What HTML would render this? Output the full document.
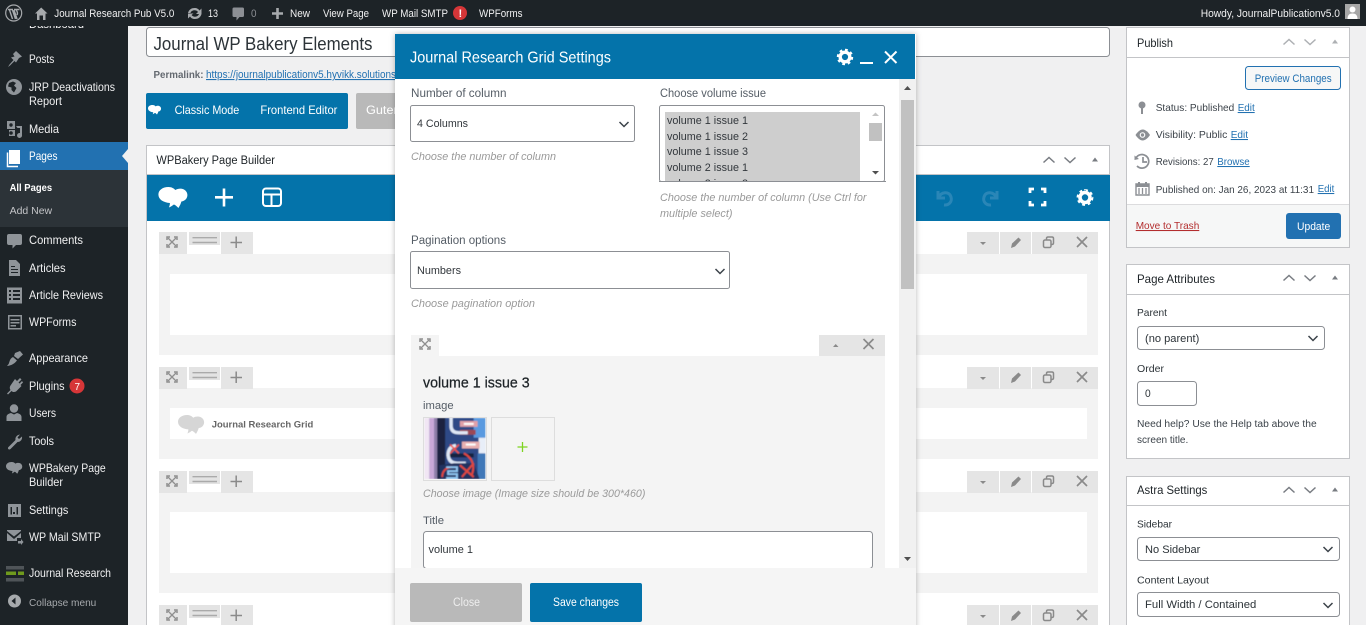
<!DOCTYPE html>
<html lang="en"><head><meta charset="utf-8"><title>Edit Page</title>
<style>
html,body{margin:0;padding:0;width:1366px;height:625px;overflow:hidden;background:#f0f0f1}
svg{display:block;font-family:"Liberation Sans",Arial,sans-serif}
</style></head><body>
<svg xmlns="http://www.w3.org/2000/svg" width="1366" height="625" viewBox="0 0 1366 625">
<defs>
<filter id="sh" x="-5%" y="-5%" width="110%" height="110%"><feDropShadow dx="0" dy="0" stdDeviation="3" flood-color="#000" flood-opacity=".28"/></filter>
<filter id="soft" x="0" y="0" width="100%" height="100%"><feGaussianBlur stdDeviation=".55"/></filter>
<path id="cloud" d="M10 0C13.500 0 15.500 1.500 17 3C18.500 2 20 1.600 22 1.600C26 1.600 29 4.500 29 8C29 11.500 26.500 14 23 14.500C22.500 16 22 18 20 21C18.500 19.500 17 18 15.500 17.500C14 18.500 13 19.500 10.500 20.500C11 19 11.500 18 11.500 16C5 15.500 0 12.500 0 7.500C0 3 4.500 0 10 0Z"/>
<g id="expand" fill="none" stroke="#8f8f8f" stroke-width="1.300"><path d="M-4-4L4 4M4-4L-4 4"/><path stroke-width="1.500" d="M-5-2V-5H-2M2-5H5V-2M5 2V5H2M-2 5H-5V2"/></g>
<path id="x" d="M-5-5L5 5M5-5L-5 5" fill="none" stroke="#8a8a8a" stroke-width="1.700"/>
<path id="chev" d="M-4.500-2L0 2.500L4.500-2" fill="none" stroke="#3c434a" stroke-width="1.500"/>
<g id="boxctl" fill="none" stroke="#787c82" stroke-width="1.500"><path d="M-5.500 2.500L0-2.500L5.500 2.500"/><path d="M15.500-2.500L21 2.500L26.500-2.500"/><path d="M46-2.500L49 1.500H43Z" fill="#787c82" stroke="none"/></g>
<g id="rowctl">
<rect x="159" y="232" width="28" height="22" fill="#e5e5e5"/><use href="#expand" x="172" y="242"/>
<rect x="189" y="232" width="31" height="13" fill="#e3e3e3"/><path d="M192.500 237.700H217M192.500 242.500H217" stroke="#aaa" stroke-width="1.400"/>
<rect x="221" y="232" width="32" height="22" fill="#e5e5e5"/><path d="M230.500 242.500H242M236.200 236.500V248" stroke="#8a8a8a" stroke-width="1.500"/>
<rect x="967" y="232" width="32" height="22" fill="#e5e5e5"/><path d="M980 242H986L983 245Z" fill="#8a8a8a"/>
<rect x="1000" y="232" width="31" height="22" fill="#e5e5e5"/><path d="M1011 248L1012 243.500L1018.500 237.500L1021 240L1015 246.500Z" fill="#8a8a8a"/>
<rect x="1032" y="232" width="66" height="22" fill="#e5e5e5"/><rect x="1043.500" y="240" width="7.500" height="7.500" rx="1.500" fill="none" stroke="#8a8a8a" stroke-width="1.500"/><path d="M1046.500 240V238.500Q1046.500 237 1048 237H1052Q1053.500 237 1053.500 238.500V243Q1053.500 244.500 1051.500 244.500" fill="none" stroke="#8a8a8a" stroke-width="1.500"/><use href="#x" x="1082" y="242"/>
</g>
</defs>

<!-- main area -->
<rect width="1366" height="625" fill="#f0f0f1"/>
<rect x="146.500" y="27.500" width="963" height="29" rx="3" fill="#fff" stroke="#8c8f94"/>
<text x="153.500" y="50" font-size="18.500" fill="#2c3338" textLength="219" lengthAdjust="spacingAndGlyphs">Journal WP Bakery Elements</text>
<text x="153.500" y="78" font-size="10.500" font-weight="bold" fill="#646970" textLength="50" lengthAdjust="spacingAndGlyphs">Permalink:</text>
<text x="206" y="78" font-size="11" fill="#2271b1" text-decoration="underline" textLength="190" lengthAdjust="spacingAndGlyphs">https://journalpublicationv5.hyvikk.solutions</text>

<rect x="146" y="93" width="202" height="36" rx="2" fill="#0473aa"/>
<use href="#cloud" transform="translate(148 105) scale(.45)" fill="#fff"/>
<g font-size="12" fill="#fff">
<text x="174.600" y="114" textLength="64.700" lengthAdjust="spacingAndGlyphs">Classic Mode</text>
<text x="260.400" y="114" textLength="77" lengthAdjust="spacingAndGlyphs">Frontend Editor</text>
</g>
<rect x="356" y="93" width="70" height="36" rx="2" fill="#b9b9b9"/>
<text x="366" y="114" font-size="12" fill="#fff" textLength="60" lengthAdjust="spacingAndGlyphs">Gutenberg</text>

<!-- WPBakery box -->
<rect x="146.500" y="145.500" width="963" height="490" fill="#fff" stroke="#c3c4c7"/>
<rect x="147" y="174" width="962" height="1" fill="#c3c4c7"/>
<text x="156.400" y="164" font-size="11.500" fill="#1d2327" textLength="118.600" lengthAdjust="spacingAndGlyphs">WPBakery Page Builder</text>
<use href="#boxctl" x="1049" y="160"/>
<rect x="147" y="175" width="963" height="46" fill="#0473aa"/>
<use href="#cloud" x="158.400" y="187" fill="#fff"/>
<path d="M215 197.300H233M224 188.500V206.500" stroke="#fff" stroke-width="2.600"/>
<rect x="263" y="188.500" width="18" height="17.500" rx="3" fill="none" stroke="#fff" stroke-width="2"/><path d="M263 194.500H281M271.500 194.500V206" stroke="#fff" stroke-width="2"/>
<g fill="none" stroke="#2a86b7" stroke-width="3"><path d="M938 191V198H945M938.500 197.500C941 192 949 190.500 951 197C952.500 202 948.500 205.500 944 205"/><path d="M997 191V198H990M996.500 197.500C994 192 986 190.500 984 197C982.500 202 986.500 205.500 991 205"/></g>
<path d="M1030 193V189H1034M1041 189H1045V193M1045 201V205H1041M1034 205H1030V201" fill="none" stroke="#fff" stroke-width="2.800"/>
<g fill="none" stroke="#fff"><circle cx="1085" cy="197.500" r="5" stroke-width="3.600"/><circle cx="1085" cy="197.500" r="7.200" stroke-width="2.400" pathLength="16" stroke-dasharray="1 1"/></g>

<!-- rows -->
<rect x="159" y="254" width="939" height="101" fill="#f3f3f3"/><rect x="170" y="274" width="917" height="61" fill="#fff"/>
<rect x="159" y="388" width="939" height="71" fill="#f3f3f3"/><rect x="170" y="408" width="917" height="31" fill="#fff"/>
<rect x="159" y="492" width="939" height="101" fill="#f3f3f3"/><rect x="170" y="512" width="917" height="61" fill="#fff"/>
<use href="#rowctl"/>
<use href="#rowctl" y="135"/>
<use href="#rowctl" y="239"/>
<use href="#rowctl" y="373"/>
<use href="#cloud" transform="translate(178 415) scale(.9)" fill="#d6d6d6"/>
<text x="211.700" y="427.500" font-size="9.500" font-weight="bold" fill="#666" textLength="101.600" lengthAdjust="spacingAndGlyphs">Journal Research Grid</text>

<!-- right column: publish -->
<rect x="1126.500" y="27.500" width="223" height="220" fill="#fff" stroke="#c3c4c7"/>
<rect x="1127" y="57" width="222" height="1" fill="#c3c4c7"/>
<text x="1137" y="47" font-size="12" fill="#1d2327" textLength="36" lengthAdjust="spacingAndGlyphs">Publish</text>
<use href="#boxctl" x="1289" y="42" opacity=".6"/>
<rect x="1245.500" y="66.500" width="95" height="23" rx="3" fill="#f6f7f7" stroke="#2271b1"/>
<text x="1254.700" y="82" font-size="11" fill="#2271b1" textLength="77" lengthAdjust="spacingAndGlyphs">Preview Changes</text>
<g font-size="10.500" fill="#3c434a">
<text x="1155.700" y="111" textLength="78.600" lengthAdjust="spacingAndGlyphs">Status: Published</text>
<text x="1155.700" y="138" textLength="71.600" lengthAdjust="spacingAndGlyphs">Visibility: Public</text>
<text x="1155.700" y="165" textLength="58" lengthAdjust="spacingAndGlyphs">Revisions: 27</text>
<text x="1155.700" y="193" textLength="158.300" lengthAdjust="spacingAndGlyphs">Published on: Jan 26, 2023 at 11:31</text>
</g>
<g font-size="10.500" fill="#2271b1" text-decoration="underline">
<text x="1237.700" y="111" textLength="17" lengthAdjust="spacingAndGlyphs">Edit</text>
<text x="1230.700" y="138" textLength="17.300" lengthAdjust="spacingAndGlyphs">Edit</text>
<text x="1217.300" y="165" textLength="32.400" lengthAdjust="spacingAndGlyphs">Browse</text>
<text x="1317.700" y="192" textLength="16.600" lengthAdjust="spacingAndGlyphs">Edit</text>
</g>
<g fill="#8c8f94">
<circle cx="1142" cy="105" r="3.500"/><rect x="1141" y="106" width="2" height="8"/>
<path d="M1135.500 135C1138 131 1141 129.500 1142.500 129.500C1144.500 129.500 1147.500 131 1150 135C1147.500 139 1144.500 140.500 1142.500 140.500C1141 140.500 1138 139 1135.500 135Z"/><circle cx="1142.500" cy="135" r="2.800" fill="#fff"/><circle cx="1142.500" cy="135" r="1.700"/>
</g>
<path d="M1136 158A6.800 6.800 0 1 1 1137 166M1143 157V162H1147" fill="none" stroke="#8c8f94" stroke-width="1.700"/><path d="M1134.500 155.500L1139 159L1134.500 160Z" fill="#8c8f94"/>
<path d="M1136 184H1149V195H1136Z" fill="none" stroke="#8c8f94" stroke-width="1.400"/><path d="M1136 184H1149V187H1136ZM1138 182H1140V185H1138ZM1145 182H1147V185H1145Z" fill="#8c8f94"/><path d="M1139 188V194M1142.500 188V194M1146 188V194" stroke="#8c8f94" stroke-width="1.300"/>
<rect x="1127" y="204" width="222" height="43" fill="#f6f7f7"/><rect x="1127" y="204" width="222" height="1" fill="#dcdcde"/>
<text x="1135.700" y="229" font-size="10.500" fill="#b32d2e" text-decoration="underline" textLength="63.600" lengthAdjust="spacingAndGlyphs">Move to Trash</text>
<rect x="1286" y="213" width="55" height="26" rx="3" fill="#2271b1"/>
<text x="1297" y="230" font-size="11" fill="#fff" textLength="33.300" lengthAdjust="spacingAndGlyphs">Update</text>

<!-- page attributes -->
<rect x="1126.500" y="264.500" width="223" height="194" fill="#fff" stroke="#c3c4c7"/>
<rect x="1127" y="294" width="222" height="1" fill="#c3c4c7"/>
<text x="1137" y="283" font-size="12" fill="#1d2327" textLength="78" lengthAdjust="spacingAndGlyphs">Page Attributes</text>
<use href="#boxctl" x="1289" y="278"/>
<text x="1137" y="316" font-size="10.500" fill="#2c3338" textLength="30" lengthAdjust="spacingAndGlyphs">Parent</text>
<rect x="1137.500" y="326.500" width="187" height="23" rx="3" fill="#fff" stroke="#8c8f94"/>
<text x="1145" y="342" font-size="11" fill="#2c3338" textLength="54.300" lengthAdjust="spacingAndGlyphs">(no parent)</text><use href="#chev" x="1313" y="338"/>
<text x="1137" y="372" font-size="10.500" fill="#2c3338" textLength="27" lengthAdjust="spacingAndGlyphs">Order</text>
<rect x="1137.500" y="381.500" width="59" height="24" rx="3" fill="#fff" stroke="#8c8f94"/>
<text x="1145" y="397" font-size="11" fill="#2c3338" textLength="5.700" lengthAdjust="spacingAndGlyphs">0</text>
<text x="1137" y="427" font-size="10" fill="#3c434a" textLength="179.700" lengthAdjust="spacingAndGlyphs">Need help? Use the Help tab above the</text>
<text x="1137" y="443" font-size="10" fill="#3c434a" textLength="51.300" lengthAdjust="spacingAndGlyphs">screen title.</text>

<!-- astra -->
<rect x="1126.500" y="476.500" width="223" height="160" fill="#fff" stroke="#c3c4c7"/>
<rect x="1127" y="505" width="222" height="1" fill="#c3c4c7"/>
<text x="1137" y="494" font-size="12" fill="#1d2327" textLength="70.300" lengthAdjust="spacingAndGlyphs">Astra Settings</text>
<use href="#boxctl" x="1289" y="490"/>
<text x="1137" y="527.500" font-size="10.500" fill="#2c3338" textLength="35" lengthAdjust="spacingAndGlyphs">Sidebar</text>
<rect x="1137.500" y="537.500" width="202" height="23" rx="3" fill="#fff" stroke="#8c8f94"/>
<text x="1145" y="553" font-size="11" fill="#2c3338" textLength="55.300" lengthAdjust="spacingAndGlyphs">No Sidebar</text><use href="#chev" x="1328" y="549"/>
<text x="1137" y="583.500" font-size="10.500" fill="#2c3338" textLength="72" lengthAdjust="spacingAndGlyphs">Content Layout</text>
<rect x="1137.500" y="592.500" width="202" height="24" rx="3" fill="#fff" stroke="#8c8f94"/>
<text x="1145" y="608" font-size="11" fill="#2c3338" textLength="111.300" lengthAdjust="spacingAndGlyphs">Full Width / Contained</text><use href="#chev" x="1328" y="605"/>

<!-- sidebar -->
<rect x="0" y="0" width="128" height="625" fill="#1d2327"/>
<text x="29" y="28" font-size="12" fill="#f0f0f1" textLength="55" lengthAdjust="spacingAndGlyphs">Dashboard</text>
<rect x="0" y="142" width="128" height="28" fill="#2271b1"/>
<path d="M128 149L122 156L128 163Z" fill="#f0f0f1"/>
<rect x="0" y="170" width="128" height="57" fill="#2c3338"/>
<g font-size="12" fill="#f0f0f1">
<text x="29" y="63" textLength="25.300" lengthAdjust="spacingAndGlyphs">Posts</text>
<text x="29" y="91" textLength="86" lengthAdjust="spacingAndGlyphs">JRP Deactivations</text>
<text x="29" y="105" textLength="33" lengthAdjust="spacingAndGlyphs">Report</text>
<text x="29" y="133" textLength="30" lengthAdjust="spacingAndGlyphs">Media</text>
<text x="29" y="160" fill="#fff" textLength="28.500" lengthAdjust="spacingAndGlyphs">Pages</text>
<text x="29" y="244" textLength="54" lengthAdjust="spacingAndGlyphs">Comments</text>
<text x="29" y="272" textLength="36.600" lengthAdjust="spacingAndGlyphs">Articles</text>
<text x="29" y="299" textLength="74" lengthAdjust="spacingAndGlyphs">Article Reviews</text>
<text x="29" y="326" textLength="47.400" lengthAdjust="spacingAndGlyphs">WPForms</text>
<text x="29" y="362" textLength="59" lengthAdjust="spacingAndGlyphs">Appearance</text>
<text x="29" y="390" textLength="35.600" lengthAdjust="spacingAndGlyphs">Plugins</text>
<text x="29" y="417" textLength="27" lengthAdjust="spacingAndGlyphs">Users</text>
<text x="29" y="445" textLength="25" lengthAdjust="spacingAndGlyphs">Tools</text>
<text x="29" y="472" textLength="76.700" lengthAdjust="spacingAndGlyphs">WPBakery Page</text>
<text x="29" y="486" textLength="34" lengthAdjust="spacingAndGlyphs">Builder</text>
<text x="29" y="514" textLength="39.300" lengthAdjust="spacingAndGlyphs">Settings</text>
<text x="29" y="541" textLength="72" lengthAdjust="spacingAndGlyphs">WP Mail SMTP</text>
<text x="29" y="577" textLength="82" lengthAdjust="spacingAndGlyphs">Journal Research</text>
</g>
<text x="9.600" y="191" font-size="10" font-weight="bold" fill="#fff" textLength="42.500" lengthAdjust="spacingAndGlyphs">All Pages</text>
<text x="9.600" y="214" font-size="10" fill="#c3c4c7" textLength="42.500" lengthAdjust="spacingAndGlyphs">Add New</text>
<text x="29" y="606" font-size="10.500" fill="#a7aaad" textLength="67.300" lengthAdjust="spacingAndGlyphs">Collapse menu</text>
<circle cx="77" cy="386" r="7.500" fill="#d63638"/><text x="74.500" y="390" font-size="10" fill="#fff">7</text>

<g fill="#8f9499">
<path d="M13 54L16 51L22 56.500L19 58L16 62.500L14.500 61L10 65.500L8 67L9.500 64.500L13.500 60L11 57.500L14.500 56.500Z"/>
<path fill-rule="evenodd" d="M14 79A8 8 0 1 0 14 95A8 8 0 1 0 14 79ZM9 83L13 81.500L16 83L14 85.500L16.500 88L14 92.500L11.500 90L11.500 87.500L8 86.500Z"/>
<path d="M7 121H15V129H7ZM9 130H15V136H9Z"/><path d="M16 126H22V135A2.500 2.500 0 1 1 20 133V128H17.500Z"/><circle cx="11" cy="125" r="1.700" fill="#1d2327"/><circle cx="11" cy="133" r="1.800" fill="#1d2327"/>
<path d="M9 234H20Q22 234 22 236V243Q22 245 20 245H16L12.500 248.500V245H9Q7 245 7 243V236Q7 234 9 234Z"/>
<path fill-rule="evenodd" d="M9 260H16L20 264V276H9ZM11 266V267H15V266ZM11 269V270H18V269ZM11 272V273H18V272Z"/>
<path fill-rule="evenodd" d="M7 287.500H22V303.500H7ZM9 290V292H11V290ZM13 290V292H20V290ZM9 294V296H11V294ZM13 294V296H20V294ZM9 298V300H11V298ZM13 298V300H20V298Z"/>
<path fill-rule="evenodd" d="M8 315H22V329.500H8ZM9.500 316.500V328H20.500V316.500ZM10.500 319H19.500V320.500H10.500ZM10.500 322H19.500V323.500H10.500ZM10.500 325H16V326.500H10.500Z"/>
<path d="M15 353L20 351L23 354.500L18 359L14 356ZM13 357L17 360.500C15 363 12 365.500 7 366C9 364 9 363 9.500 361.500C10 359.500 11 358 13 357Z"/>
<path d="M15 379L17 381L20 378L21.500 379.500L18.500 382.500L19.500 383.500L22 381L23 382.500L20.500 385L21.500 386L16 391.500C14 392.500 12.500 392 11.500 391L8 394.500L7 393.500L10.500 390C9.500 388.500 9.500 387 10.500 385.500Z"/>
<circle cx="14" cy="408.500" r="4.200"/><path d="M6.500 421V417C6.500 414.500 9 413.500 11 413L14 414.500L17 413C19 413.500 21.500 414.500 21.500 417V421Z"/>
<path d="M22 436.500C22.500 439.500 20.500 442 17.500 442L10.500 449C9 450.500 7 448.500 8.500 447L15.500 440C15 437 17 435 20 434.500L17.500 437.500L19 439L22 436.500Z"/>
<use href="#cloud" transform="translate(6 462) scale(.56)"/>
<path fill-rule="evenodd" d="M8 504H21V517H8ZM10.500 507V514.500H12V507ZM16.500 507V514.500H18V507ZM13 512V514H15V512Z"/>
<path d="M7 531L14 536.500L21 531V530H7ZM7 533V541H17V538H21V533L14 539Z"/><path d="M18 541H21V539L23.500 542L21 545V543.500H18Z"/>
</g>
<rect x="6" y="566" width="18" height="3.500" fill="#4f5458"/><rect x="6" y="571.500" width="10" height="3.500" fill="#6f9a1d"/><rect x="18" y="571.500" width="6" height="3.500" fill="#6f9a1d"/><rect x="6" y="578" width="18" height="3.500" fill="#4f5458"/>
<circle cx="14.500" cy="601" r="6.500" fill="#a7aaad"/><path d="M11.500 601L15.500 597.500V604.500Z" fill="#1d2327"/>
<path d="M9 150H20V164H9Z" fill="#fff"/><path d="M7.500 152.500V166.500H18" fill="none" stroke="#fff" stroke-width="1.500"/>

<!-- admin bar -->
<rect width="1366" height="26" fill="#1d2327"/>
<circle cx="13.700" cy="13" r="8" fill="none" stroke="#a7aaad" stroke-width="1.200"/>
<path d="M8 9.500H13M14 9.500H19.500M9.500 10L12.500 19M14 10L17 19M12.500 10L15.500 19M16 9.800C17 11 18 13 17 15" fill="none" stroke="#a7aaad" stroke-width="1.400"/>
<path d="M35 13.500L41.200 7.500L47.500 13.500H45.500V20H43V15.500H39.500V20H37V13.500Z" fill="#a7aaad"/>
<path d="M188 13C189 9.500 191.500 8 194.500 8C197 8 198.500 9 199.500 10.500L201.500 8.500V14H196L198 12C197 10.800 196 10.300 194.500 10.300C192.500 10.300 191 11.500 190.500 13ZM201.500 14C200.500 17.500 198 19 195 19C192.500 19 191 18 190 16.500L188 18.500V13.500H193.500L191.500 15C192.500 16.200 193.500 16.700 195 16.700C197 16.700 198.500 15.500 199 14Z" fill="#a7aaad"/>
<path d="M234 7.500H242.500Q244 7.500 244 9V15.500Q244 17 242.500 17H239.500L236.500 20.500V17H234Q232.500 17 232.500 15.500V9Q232.500 7.500 234 7.500Z" fill="#8c8f94"/>
<path d="M272 13.500H283M277.500 8V19" stroke="#a7aaad" stroke-width="2.600"/>
<g font-size="11" fill="#f0f0f1">
<text x="54.300" y="17" textLength="120" lengthAdjust="spacingAndGlyphs">Journal Research Pub V5.0</text>
<text x="208" y="17" textLength="10" lengthAdjust="spacingAndGlyphs">13</text>
<text x="251" y="17" fill="#8c8f94" textLength="5.500" lengthAdjust="spacingAndGlyphs">0</text>
<text x="290" y="17" textLength="20" lengthAdjust="spacingAndGlyphs">New</text>
<text x="323" y="17" textLength="46" lengthAdjust="spacingAndGlyphs">View Page</text>
<text x="382" y="17" textLength="66" lengthAdjust="spacingAndGlyphs">WP Mail SMTP</text>
<text x="479" y="17" textLength="43.500" lengthAdjust="spacingAndGlyphs">WPForms</text>
<text x="1200.700" y="17" textLength="139.300" lengthAdjust="spacingAndGlyphs">Howdy, JournalPublicationv5.0</text>
</g>
<circle cx="460" cy="13" r="7" fill="#d63638"/><text x="458.500" y="17" font-size="11" font-weight="bold" fill="#fff">!</text>
<rect x="1345" y="4" width="15" height="15" fill="#a7a7a7"/><circle cx="1352.500" cy="9.500" r="3" fill="#fff"/><path d="M1347.500 19C1347.500 15 1349.500 13.500 1352.500 13.500C1355.500 13.500 1357.500 15 1357.500 19Z" fill="#fff"/>

<!-- modal -->
<rect x="395" y="34" width="521" height="600" fill="#fff" filter="url(#sh)"/>
<rect x="395" y="34" width="520" height="45" fill="#0473aa"/>
<text x="410" y="62.500" font-size="16" fill="#fff" textLength="201" lengthAdjust="spacingAndGlyphs">Journal Research Grid Settings</text>
<g fill="none" stroke="#fff"><circle cx="845" cy="57" r="4.800" stroke-width="3.400"/><circle cx="845" cy="57" r="7" stroke-width="2.400" pathLength="16" stroke-dasharray="1 1"/></g>
<rect x="860" y="62" width="13" height="2" fill="#fff"/>
<path d="M885 51.500L896.500 63M896.500 51.500L885 63" stroke="#fff" stroke-width="2"/>

<!-- scrollbar -->
<rect x="899" y="79" width="17" height="489" fill="#f1f1f1"/>
<rect x="901" y="100" width="13" height="189" fill="#c1c1c1"/>
<path d="M907.500 86L911 90H904Z" fill="#505050"/><path d="M904 557H911L907.500 561Z" fill="#505050"/>

<!-- form -->
<g font-size="11.500" fill="#555d66">
<text x="411" y="97" textLength="95.500" lengthAdjust="spacingAndGlyphs">Number of column</text>
<text x="660" y="97" textLength="106" lengthAdjust="spacingAndGlyphs">Choose volume issue</text>
<text x="411" y="244" textLength="95" lengthAdjust="spacingAndGlyphs">Pagination options</text>
</g>
<rect x="410.500" y="105.500" width="224" height="36" rx="2" fill="#fff" stroke="#8c8f94"/>
<text x="417" y="127" font-size="11" fill="#32373c" textLength="51" lengthAdjust="spacingAndGlyphs">4 Columns</text><use href="#chev" x="624" y="124"/>
<g font-size="11" font-style="italic" fill="#9a9a9a">
<text x="411" y="160" textLength="145" lengthAdjust="spacingAndGlyphs">Choose the number of column</text>
<text x="660" y="201" textLength="206.500" lengthAdjust="spacingAndGlyphs">Choose the number of column (Use Ctrl for</text>
<text x="660" y="217" textLength="72.500" lengthAdjust="spacingAndGlyphs">multiple select)</text>
<text x="411" y="307" textLength="124" lengthAdjust="spacingAndGlyphs">Choose pagination option</text>
</g>
<rect x="659.500" y="105.500" width="225" height="76" rx="2" fill="#fff" stroke="#8c8f94"/>
<rect x="665" y="112" width="195" height="69" fill="#cecece"/>
<g font-size="11" fill="#32373c">
<text x="667" y="124" textLength="81" lengthAdjust="spacingAndGlyphs">volume 1 issue 1</text>
<text x="667" y="140" textLength="81" lengthAdjust="spacingAndGlyphs">volume 1 issue 2</text>
<text x="667" y="155" textLength="81" lengthAdjust="spacingAndGlyphs">volume 1 issue 3</text>
<text x="667" y="171" textLength="81" lengthAdjust="spacingAndGlyphs">volume 2 issue 1</text>
<text x="667" y="187" textLength="81" lengthAdjust="spacingAndGlyphs">volume 2 issue 2</text>
</g>
<rect x="660" y="181" width="224" height="8" fill="#fff"/>
<rect x="659" y="181" width="227" height="1" fill="#8c8f94"/>
<rect x="869" y="123" width="13" height="18" fill="#c1c1c1"/>
<path d="M875.500 112.500L879 116H872Z" fill="#c4c4c4"/><path d="M872 171H879L875.500 174.500Z" fill="#505050"/>
<rect x="410.500" y="251.500" width="319" height="37" rx="2" fill="#fff" stroke="#8c8f94"/>
<text x="417" y="274" font-size="11" fill="#32373c" textLength="44" lengthAdjust="spacingAndGlyphs">Numbers</text><use href="#chev" x="720" y="271"/>

<!-- param group -->
<rect x="411" y="335" width="28" height="21" fill="#f4f4f4"/><use href="#expand" x="425" y="344"/>
<rect x="819" y="335" width="66" height="21" fill="#e5e5e5"/><path d="M833 347H838.500L835.700 344Z" fill="#8a8a8a"/><use href="#x" x="868.500" y="344"/>
<rect x="411" y="356" width="474" height="212" fill="#f4f4f4"/>
<text x="423" y="387.500" font-size="14.500" fill="#1d2327" stroke="#1d2327" stroke-width=".25" textLength="106.600" lengthAdjust="spacingAndGlyphs">volume 1 issue 3</text>
<text x="423" y="409" font-size="11" fill="#555d66" textLength="30.600" lengthAdjust="spacingAndGlyphs">image</text>
<rect x="423.500" y="417.500" width="63" height="63" fill="#f4f4f4" stroke="#ddd"/>
<svg x="424" y="418" width="62" height="61" viewBox="0 0 62 62">
<g filter="url(#soft)">
<rect width="62" height="62" fill="#2d4a86"/>
<rect width="5" height="62" fill="#f1e6f4"/><rect x="5" width="5" height="62" fill="#c9a8d8"/><rect x="10" width="3" height="62" fill="#8f7fa8"/>
<rect x="13" width="8" height="62" fill="#1a2140"/>
<rect x="50" width="12" height="20" fill="#5a9ae0"/><rect x="55" y="20" width="7" height="16" fill="#e8eef8"/><rect x="54" y="36" width="8" height="26" fill="#3f78b8"/>
<rect x="36" y="3" width="18" height="6" fill="#e0a0a8"/><rect x="40" y="5" width="10" height="2" fill="#fff"/><rect x="36" y="12" width="16" height="5" fill="#9c4a55"/><rect x="38" y="24" width="18" height="7" fill="#e8b0b0"/><rect x="42" y="26" width="10" height="2" fill="#fff"/>
<rect x="22" y="36" width="28" height="4" fill="#16223f"/>
<path d="M27 0V8Q27 15 35 15H44M32 28Q24 29 24 38Q25 46 33 46H42" fill="none" stroke="#dfe8f6" stroke-width="3.400"/>
<path d="M15 48L30 46L50 46L56 62L16 62Z" fill="#20315e"/>
<path d="M40 36C48 40 52 48 48 58M36 48L50 60M50 46L38 60M18 60C18 54 22 50 28 50" fill="none" stroke="#e0483f" stroke-width="2"/>
<path d="M22 50H33V54H24V57H33V61H22" fill="none" stroke="#8fc4f0" stroke-width="2"/>
<path d="M26 27L35 36M35 27L26 36" stroke="#f0564e" stroke-width="1.600"/>
</g>
</svg>
<rect x="491.500" y="417.500" width="63" height="63" fill="#f4f4f4" stroke="#ddd"/>
<path d="M517.500 447H527.500M522.500 442V452" stroke="#7ed321" stroke-width="1.300"/>
<text x="423" y="497" font-size="11" font-style="italic" fill="#9a9a9a" textLength="222.400" lengthAdjust="spacingAndGlyphs">Choose image (Image size should be 300*460)</text>
<text x="423" y="524" font-size="11" fill="#555d66" textLength="21" lengthAdjust="spacingAndGlyphs">Title</text>
<rect x="423.500" y="531.500" width="449" height="37" rx="3" fill="#fff" stroke="#8c8f94"/>
<text x="428.500" y="553" font-size="11" fill="#32373c" textLength="44.500" lengthAdjust="spacingAndGlyphs">volume 1</text>

<!-- footer -->
<rect x="395" y="568" width="521" height="57" fill="#f5f5f5"/>
<rect x="410" y="583" width="112" height="39" rx="2" fill="#b9b9b9"/>
<text x="453" y="606" font-size="11.500" fill="#eee" textLength="27" lengthAdjust="spacingAndGlyphs">Close</text>
<rect x="530" y="583" width="112" height="39" rx="2" fill="#0473aa"/>
<text x="553" y="606" font-size="11.500" fill="#fff" textLength="66" lengthAdjust="spacingAndGlyphs">Save changes</text>
</svg>
</body></html>
